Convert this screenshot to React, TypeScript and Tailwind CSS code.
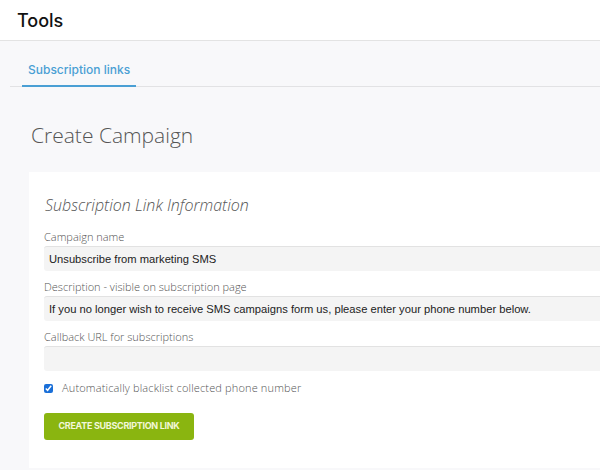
export default function App() {
  return (
    <div className="h-[470px] w-[600px] overflow-hidden bg-[#f8f8fa] font-['Open_Sans',sans-serif]">
      <header className="flex h-[41px] items-center border-b border-[#e3e3e3] bg-white px-[17px]">
        <h1 className="text-[18px] font-medium text-[#111] font-['Inter',sans-serif]">Tools</h1>
      </header>

      <nav className="ml-[10px] flex h-[46px] items-end border-b border-[#e2e2e4]">
        <div className="ml-[12px] -mb-px border-b-2 border-[#4a9fd4] px-[6px] pb-[6px] text-[12px] font-medium text-[#4a9fd4] font-['Inter',sans-serif]">
          Subscription links
        </div>
      </nav>

      <div className="pl-[29px] pt-[33px]">
        <h2 className="pl-[2px] text-[21px] font-light leading-[30px] text-[#555]">Create Campaign</h2>

        <section className="mt-[22px] bg-white pb-[28px] pl-[15px] pt-[22px]">
          <h3 className="pl-[1px] text-[16px] font-light italic leading-[22px] text-[#555]">
            Subscription Link Information
          </h3>

          <div className="mt-[14px] flex flex-col gap-[9px]">
            <Field label="Campaign name" value="Unsubscribe from marketing SMS" />
            <Field
              label="Description - visible on subscription page"
              value="If you no longer wish to receive SMS campaigns form us, please enter your phone number below."
            />
            <Field label="Callback URL for subscriptions" value="" />
          </div>

          <label className="mt-[9px] flex items-center gap-[9px] text-[11px] font-light tracking-[0.15px] text-[#555]">
            <input type="checkbox" defaultChecked className="h-[9px] w-[9px] accent-[#1a6fd8]" />
            Automatically blacklist collected phone number
          </label>

          <button className="mt-[16px] h-[27px] w-[150px] rounded-[3px] bg-[#8ab510] text-[9px] font-bold tracking-[-0.3px] text-[#f2f7d9] font-['Inter',sans-serif]">
            CREATE SUBSCRIPTION LINK
          </button>
        </section>
      </div>
    </div>
  );
}

function Field({ label, value }: { label: string; value: string }) {
  return (
    <div>
      <div className="mb-[2px] text-[11px] font-light leading-[14px] text-[#555]">{label}</div>
      <div className="flex h-[25px] items-center rounded-l-[3px] border-t border-[#e2e2e2] bg-[#f4f4f4] pl-[5px] text-[11.2px] text-[#222] font-['Liberation_Sans',sans-serif]">
        {value}
      </div>
    </div>
  );
}
